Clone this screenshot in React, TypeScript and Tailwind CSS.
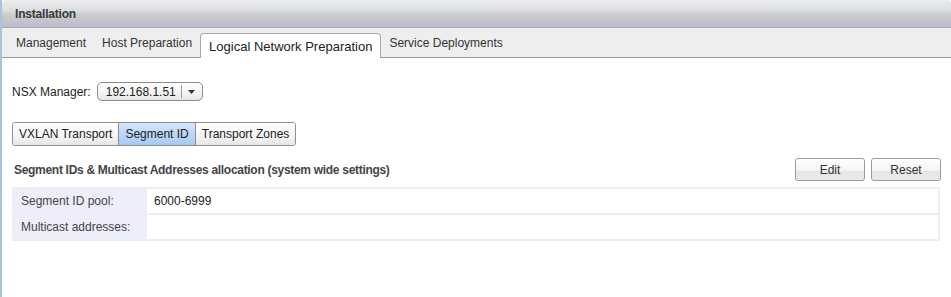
import React from 'react'

const font = { fontFamily: '"Liberation Sans", Arial, sans-serif' }

const mainTabs = ['Management', 'Host Preparation', 'Logical Network Preparation', 'Service Deployments']
const subTabs = ['VXLAN Transport', 'Segment ID', 'Transport Zones']

function Button({ label }: { label: string }) {
	return (
		<button className="h-[23px] w-[70px] rounded-[3px] border border-[#9a9a9a] bg-[linear-gradient(#ffffff_0%,#f4f4f4_55%,#e4e4e4_56%,#ececec_100%)] text-[12px] text-[#333]">
			{label}
		</button>
	)
}

export default function App() {
	return (
		<div style={font} className="h-[297px] w-[951px] overflow-hidden bg-white">
			<div className="flex h-full border-l-2 border-[#a9c3df]">
				<div className="flex min-w-0 flex-1 flex-col">
					<div className="flex h-[28px] items-center rounded-t-[4px] border-b border-[#a7a7b9] bg-[linear-gradient(#ececef_0%,#dcdde0_40%,#cfd6da_45%,#c9c9ce_60%,#bdbdc8_100%)] pl-[13px]">
						<span className="text-[12px] font-bold tracking-[-0.2px] text-[#3a3a3a]">Installation</span>
					</div>
					<div className="flex h-[30px] items-end border-b border-[#9c9c9c] bg-[#eeeeee] pl-[6px]">
						{mainTabs.map(tab =>
							tab === 'Logical Network Preparation' ? (
								<div
									key={tab}
									className="-mb-px flex h-[25px] items-center rounded-t-[4px] border border-b-0 border-[#a8a8a8] bg-white px-[8px] pt-[2px] text-[13px] text-[#222]"
								>
									{tab}
								</div>
							) : (
								<div key={tab} className="flex h-[26px] items-center px-[8px] pb-[2px] text-[12px] text-[#333]">
									{tab}
								</div>
							),
						)}
					</div>
					<div className="flex flex-col px-[10px]">
						<div className="mt-[24px] flex items-center gap-[6px] text-[12px] text-[#222]">
							<span>NSX Manager:</span>
							<div className="flex h-[19px] items-center rounded-[5px] border border-[#8c8c8c] bg-[linear-gradient(#ffffff_0%,#f6f6f6_50%,#e6e6e6_100%)]">
								<span className="w-[83px] pl-[8px] text-[12px] text-[#222]">192.168.1.51</span>
								<div className="h-[13px] w-px bg-[#9a9a9a]" />
								<div className="flex w-[20px] justify-center">
									<svg width="7" height="4" viewBox="0 0 7 4">
										<path d="M0 0h7L3.5 4z" fill="#333" />
									</svg>
								</div>
							</div>
						</div>
						<div className="mt-[21px] flex h-[24px] w-fit overflow-hidden rounded-[3px] border border-[#8e8e8e] text-[12px] text-[#222]">
							{subTabs.map((tab, i) => (
								<div
									key={tab}
									className={
										tab === 'Segment ID'
											? 'flex items-center border-l border-[#8e8e8e] bg-[linear-gradient(#d6e6fb_0%,#bcd6f7_50%,#a8c9f3_100%)] px-[6px]'
											: `flex items-center bg-[linear-gradient(#ffffff_0%,#f4f4f4_60%,#e6e6e6_100%)] px-[6px] ${i > 0 ? 'border-l border-[#8e8e8e]' : ''}`
									}
								>
									{tab}
								</div>
							))}
						</div>
						<div className="mt-[12px] flex items-center justify-between">
							<span className="pl-[2px] text-[12px] font-bold tracking-[-0.3px] text-[#444]">
								Segment IDs &amp; Multicast Addresses allocation (system wide settings)
							</span>
							<div className="flex gap-[6px]">
								<Button label="Edit" />
								<Button label="Reset" />
							</div>
						</div>
						<div className="mt-[6px] mr-[1px] border-2 border-[#eeeeee] text-[12px]">
							<div className="flex h-[24px]">
								<div className="flex w-[133px] items-center bg-[#eeeefb] pl-[7px] text-[#444]">Segment ID pool:</div>
								<div className="flex flex-1 items-center pl-[7px] text-[#222]">6000-6999</div>
							</div>
							<div className="flex h-[26px] border-t-2 border-[#eeeeee]">
								<div className="flex w-[133px] items-center bg-[#eeeefb] pl-[7px] text-[#444]">Multicast addresses:</div>
								<div className="flex-1" />
							</div>
						</div>
					</div>
				</div>
			</div>
		</div>
	)
}
